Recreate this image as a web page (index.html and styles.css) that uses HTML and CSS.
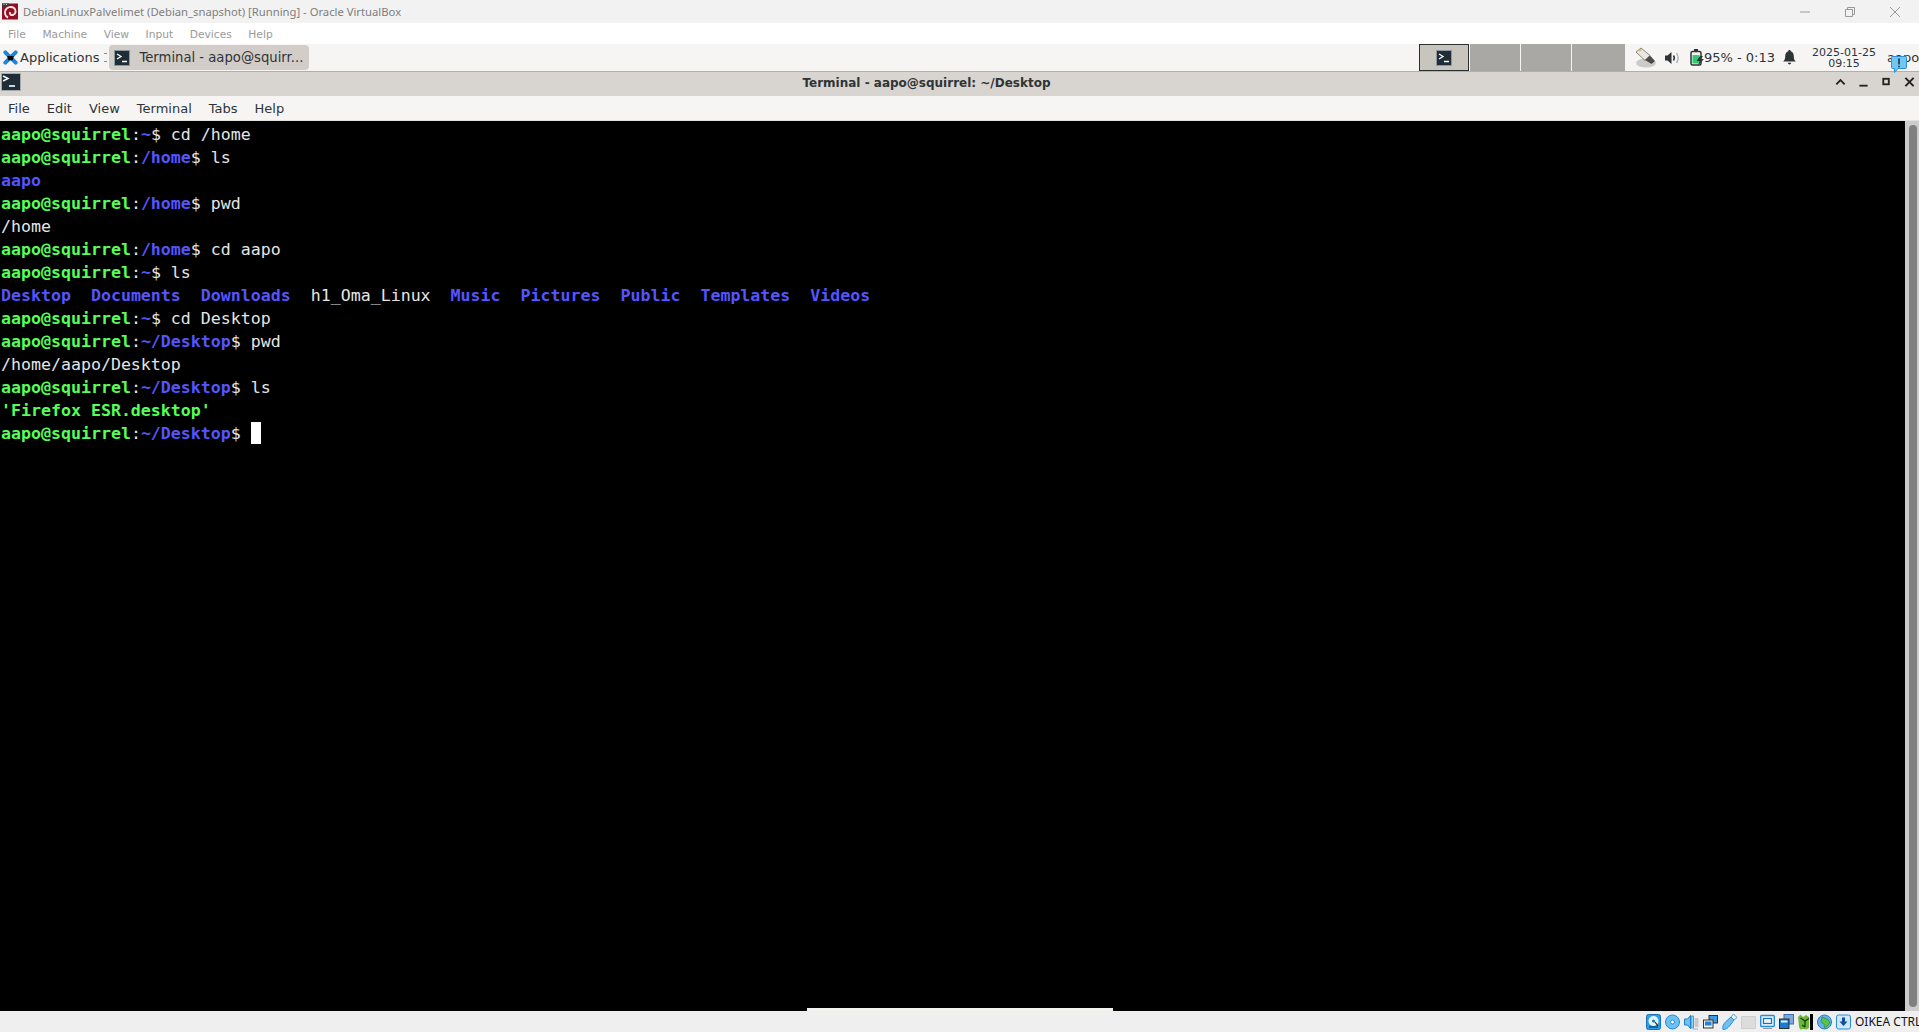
FILE: index.html
```html
<!DOCTYPE html>
<html lang="en">
<head>
<meta charset="utf-8">
<title>DebianLinuxPalvelimet</title>
<link rel="stylesheet" href="styles.css">
</head>
<body>
<div class="screen">
  <header class="host-title">
    <svg class="host-logo" viewBox="0 0 16 16"><rect width="16" height="16" fill="#8f1024"/><path d="M0 0h7v3H0z" fill="#3a3a3a"/><path d="M1.500 1h1M4 1h1" stroke="#ddd"/><path d="M6 14C3 12.500 2.500 9 3.500 6.500 5 3.500 9.500 2.500 12 4.500 14.500 6.500 14 10.500 11 11.500 9 12 7.300 10.500 8 8.500" fill="none" stroke="#ffdfe0" stroke-width="2"/></svg>
    <span class="host-title-text">DebianLinuxPalvelimet (Debian_snapshot) [Running] - Oracle VirtualBox</span>
    <div class="host-controls">
      <svg viewBox="0 0 10 10"><path d="M0 5h10" stroke="#999" fill="none"/></svg>
      <svg viewBox="0 0 10 10"><path d="M.5 2.500h7v7h-7zM2.500 2.500v-2h7v7h-2" stroke="#999" fill="none"/></svg>
      <svg viewBox="0 0 10 10"><path d="M0 0l10 10M10 0L0 10" stroke="#999" fill="none"/></svg>
    </div>
  </header>
  <nav class="host-menu"><span>File</span><span>Machine</span><span>View</span><span>Input</span><span>Devices</span><span>Help</span></nav>
  <div class="panel">
    <svg class="apps-logo" viewBox="0 0 16 16"><path d="M2.500 2.500l11 11M13.500 2.500l-11 11" stroke="#1a86e0" stroke-width="4.200" stroke-linecap="round"/><path d="M4.500 6.500h7l-1 4.500h-5z" fill="#0c0c0c"/></svg>
    <span class="apps-label">Applications</span>
    <span class="panel-sep"></span>
    <div class="task">
      <svg class="term-icon" viewBox="0 0 16 16"><rect x=".5" y=".5" width="15" height="15" fill="#1f2d38" stroke="#8e979c"/><path d="M3 4l4 2.500L3 9" fill="none" stroke="#fff" stroke-width="1.300"/><path d="M8 11.500h5" stroke="#fff" stroke-width="1.500"/></svg>
      <span>Terminal - aapo@squirr...</span>
    </div>
    <div class="panel-spacer"></div>
    <div class="pager">
      <div class="pager-active"><svg class="term-icon" viewBox="0 0 16 16"><rect x=".5" y=".5" width="15" height="15" fill="#1f2d38" stroke="#8e979c"/><path d="M3 4l4 2.500L3 9" fill="none" stroke="#fff" stroke-width="1.300"/><path d="M8 11.500h5" stroke="#fff" stroke-width="1.500"/></svg></div>
      <div class="pager-cell"></div>
      <div class="pager-cell"></div>
      <div class="pager-cell pager-last"></div>
    </div>
    <div class="tray">
      <svg class="tray-usb" viewBox="0 0 21 21"><ellipse cx="11" cy="16" rx="10" ry="4.500" fill="#999" opacity=".45"/><path d="M1 5l5-4 9 7.500-5 5z" fill="#e8e8e0" stroke="#7a7a74" stroke-width=".9"/><path d="M10 13l5-4.500 5 5.500-3.500 3z" fill="#4a4a4a"/><path d="M3.500 3.500l2-1.500 1.500 1-2 1.500z" fill="#d9c04a"/></svg>
      <svg class="tray-vol" viewBox="0 0 16 14"><path d="M1 4.500h2.500L7.500 1v12L3.500 9.500H1z" fill="#2d3436"/><path d="M9.500 4.500c1 1.500 1 3.500 0 5" fill="none" stroke="#2d3436" stroke-width="1.500"/><path d="M12.500 2c2 3 2 7 0 10" fill="none" stroke="#a9adae" stroke-width="1.300"/></svg>
      <svg class="tray-bat" viewBox="0 0 15 17"><rect x="1" y="2.500" width="10" height="13.500" rx="1.500" fill="none" stroke="#2d3436" stroke-width="1.500"/><rect x="4" y="0" width="4" height="2.500" fill="#2d3436"/><rect x="2.500" y="6" width="7" height="8.500" fill="#2ecc71"/><path d="M10 7l-3.500 5h3L8 16.500 14 10h-3l2-3z" fill="#2d3436"/></svg>
      <span class="bat-text">95% - 0:13</span>
      <svg class="tray-bell" viewBox="0 0 13 15"><path d="M6.500 0c.8 0 1.200.5 1.200 1.200C10 2 10.800 4 10.800 6.500c0 2.500.7 3.800 2 5H.2c1.300-1.200 2-2.500 2-5C2.200 4 3 2 5.300 1.200 5.300.5 5.700 0 6.500 0zM4.800 12.800h3.400c-.2 1-.9 1.700-1.700 1.700s-1.500-.7-1.700-1.700z" fill="#2d3436"/></svg>
      <div class="clock"><span>2025-01-25</span><span>09:15</span></div>
      <span class="user">aapo</span>
    </div>
    <div class="bubble">
      <svg viewBox="0 0 16 17"><path d="M1.500.5h13a1 1 0 0 1 1 1v10a1 1 0 0 1-1 1H7L3.500 16.500V12.500h-2a1 1 0 0 1-1-1v-10a1 1 0 0 1 1-1z" fill="#70c6f4" stroke="#2d8fd5"/><path d="M8 2.500v6" stroke="#111" stroke-width="1.300"/><path d="M8 9.800v1.500" stroke="#111" stroke-width="1.300"/></svg>
    </div>
  </div>
  <div class="win-title">
    <svg class="win-icon" viewBox="0 0 20 18"><rect x=".5" y=".5" width="19" height="17" fill="#1f2d38" stroke="#a2a8ab"/><path d="M2 3l5 2.500L2 8" fill="none" stroke="#fff" stroke-width="1.400"/><path d="M8 13h6" stroke="#fff" stroke-width="1.600"/></svg>
    <span class="win-title-text">Terminal - aapo@squirrel: ~/Desktop</span>
    <div class="win-controls">
      <svg viewBox="0 0 12 12"><path d="M1.500 8.500L6 4l4.500 4.500" fill="none" stroke="#222" stroke-width="2"/></svg>
      <svg viewBox="0 0 12 12"><path d="M1.500 10h9" stroke="#222" stroke-width="2"/></svg>
      <svg viewBox="0 0 12 12"><rect x="2.500" y="2.500" width="6" height="6" fill="none" stroke="#222" stroke-width="2"/></svg>
      <svg viewBox="0 0 12 12"><path d="M1.500 1.500l9 9M10.500 1.500l-9 9" stroke="#222" stroke-width="2.200"/></svg>
    </div>
  </div>
  <nav class="term-menu"><span>File</span><span>Edit</span><span>View</span><span>Terminal</span><span>Tabs</span><span>Help</span></nav>
  <main class="term-area">
    <div class="term-text">
      <div class="ln"><b class="g">aapo@squirrel</b>:<b class="b">~</b>$ cd /home</div>
      <div class="ln"><b class="g">aapo@squirrel</b>:<b class="b">/home</b>$ ls</div>
      <div class="ln"><b class="b">aapo</b></div>
      <div class="ln"><b class="g">aapo@squirrel</b>:<b class="b">/home</b>$ pwd</div>
      <div class="ln">/home</div>
      <div class="ln"><b class="g">aapo@squirrel</b>:<b class="b">/home</b>$ cd aapo</div>
      <div class="ln"><b class="g">aapo@squirrel</b>:<b class="b">~</b>$ ls</div>
      <div class="ln"><b class="b">Desktop</b>  <b class="b">Documents</b>  <b class="b">Downloads</b>  h1_Oma_Linux  <b class="b">Music</b>  <b class="b">Pictures</b>  <b class="b">Public</b>  <b class="b">Templates</b>  <b class="b">Videos</b></div>
      <div class="ln"><b class="g">aapo@squirrel</b>:<b class="b">~</b>$ cd Desktop</div>
      <div class="ln"><b class="g">aapo@squirrel</b>:<b class="b">~/Desktop</b>$ pwd</div>
      <div class="ln">/home/aapo/Desktop</div>
      <div class="ln"><b class="g">aapo@squirrel</b>:<b class="b">~/Desktop</b>$ ls</div>
      <div class="ln"><b class="g">'Firefox ESR.desktop'</b></div>
      <div class="ln"><b class="g">aapo@squirrel</b>:<b class="b">~/Desktop</b>$ <span class="cursor"></span></div>
    </div>
    <div class="scrollbar"><div class="thumb"></div></div>
    <div class="strip"></div>
  </main>
  <footer class="status">
    <svg class="si" viewBox="0 0 15 16"><rect x=".5" y=".5" width="14" height="15" rx="2" fill="#2f9fe8" stroke="#1670b8"/><circle cx="7.500" cy="7" r="5" fill="#e8f4fc"/><circle cx="7.500" cy="7" r="1.500" fill="#1670b8"/><path d="M3 13h9M9 8l3 4" stroke="#123" stroke-width="1.200"/></svg>
    <svg class="si" viewBox="0 0 15 16"><circle cx="7.500" cy="8" r="7" fill="#6cc0f2" stroke="#2a8bd4"/><circle cx="7.500" cy="8" r="2" fill="#fff" stroke="#2a8bd4"/></svg>
    <svg class="si" viewBox="0 0 15 16"><path d="M.5 5h3l3-3.500v13l-3-3.500h-3z" fill="#6cc0f2" stroke="#1f7fc9"/><rect x="7" y="2" width="2.500" height="12" fill="#8fd0f5" stroke="#1f7fc9" stroke-width=".7"/><path d="M10.500 4h4v9h-4z" fill="#c9c9c9"/><path d="M9 15h5" stroke="#aaa"/></svg>
    <svg class="si" viewBox="0 0 15 16"><rect x="6" y="1.500" width="8.500" height="7.500" fill="#3e9ae3" stroke="#222" stroke-width=".9"/><rect x=".5" y="6" width="9.500" height="8" fill="#e6f2fb" stroke="#222" stroke-width=".9"/><rect x="2" y="7.500" width="6.500" height="4" fill="#2b7fcf"/></svg>
    <svg class="si" viewBox="0 0 15 16"><path d="M1 15.500c-.8-3 .3-5.500 3-8L9 3l3 3-4.500 6c-2 2.500-4 3.500-6.500 3.500z" fill="#6cc0f2" stroke="#2a8bd4"/><path d="M9 3l2.500-3L15 3.500 12 6z" fill="#e8f4fc" stroke="#2a8bd4" stroke-width=".8"/></svg>
    <svg class="si" viewBox="0 0 15 16"><path d="M.5 2.500h14v12H.5z" fill="#dcdcdc" stroke="#cfcfcf"/></svg>
    <svg class="si" viewBox="0 0 15 16"><rect x=".7" y="1.500" width="13.600" height="11" rx="1" fill="#eaf5fc" stroke="#2a8bd4" stroke-width="1.400"/><rect x="3.500" y="4.500" width="8" height="5" fill="none" stroke="#1d6fb8" stroke-width="1.200"/><path d="M3 14.500h9" stroke="#999"/></svg>
    <svg class="si" viewBox="0 0 15 16"><rect x="5" y=".5" width="9.500" height="9.500" fill="#7ea9dc" stroke="#3b6fae"/><rect x=".5" y="5" width="9.500" height="9.500" fill="#1b7bd0" stroke="#222" stroke-width=".9"/><rect x="2" y="6.500" width="6.500" height="2" fill="#e8f4fc"/></svg>
    <svg class="si" viewBox="0 0 15 16"><path d="M0 3l2.500-2.500L5 3l3-2 3 2v11l-2.500 1.500L5 15l-3 .5-1-3z" fill="#6db83a"/><path d="M2.500 4l4.500 3 4-2.500M7 7v6M4 11l3 2" fill="none" stroke="#123a08" stroke-width="1.200"/><rect x="12" y="0" width="3" height="16" fill="#000"/></svg>
    <svg class="si" viewBox="0 0 15 16"><circle cx="7.500" cy="8" r="7" fill="#63b3ee" stroke="#2a7fc7"/><path d="M5 3l6 2.500 2 3.500-5 5.500-1-4.500-3-2z" fill="#5cc04a" stroke="#2e8b2e" stroke-width=".7"/></svg>
    <svg class="si" viewBox="0 0 15 16"><rect x=".5" y="1" width="14" height="14" rx="2" fill="#cfe7f9" stroke="#2a8bd4"/><path d="M6 3.500h3v4h2.500L7.500 12 3.500 7.500H6z" fill="#0f4f9c"/></svg>
    <span class="status-key">OIKEA CTRL</span>
  </footer>
</div>
</body>
</html>
```

FILE: styles.css
```css
* { box-sizing: border-box; }
html, body { margin: 0; padding: 0; height: 100%; overflow: hidden; background: #000; }
.screen { display: flex; flex-direction: column; width: 1919px; height: 1032px; font-family: "DejaVu Sans", sans-serif; }

.host-title { flex: 0 0 23px; display: flex; align-items: center; background: #f2f2f2; }
.host-logo { width: 16px; height: 17px; margin-left: 2px; }
.host-title-text { margin-left: 5px; font-family: "Noto Sans", sans-serif; font-size: 11.250px; color: #7e7e7e; }
.host-controls { margin-left: auto; display: flex; align-items: center; gap: 35px; padding-right: 19px; }
.host-controls svg { width: 10px; height: 10px; display: block; }

.host-menu { flex: 0 0 21px; display: flex; align-items: center; gap: 16.500px; padding: 2px 0 0 8px; background: #fff; font-size: 10.700px; color: #9a9a9a; }
.host-menu span { white-space: nowrap; }

.panel { position: relative; flex: 0 0 28px; display: flex; align-items: center; background: #f6f5f4; border-bottom: 1px solid #b3aeaa; font-size: 13px; color: #2e3436; overflow: visible; }
.apps-logo { width: 15px; height: 15px; margin-left: 3px; }
.apps-label { margin-left: 2px; font-size: 13px; }
.panel-sep { width: 3px; height: 9px; margin-left: 5px; border-top: 1px solid #888; border-bottom: 1px solid #888; }
.task { display: flex; align-items: center; gap: 9px; width: 200px; height: 25px; margin-left: 2px; padding-left: 5px; background: #d2cdc9; border-radius: 4px; font-size: 13.200px; }
.term-icon { width: 16px; height: 16px; display: block; }
.panel-spacer { flex: 1; }
.pager { display: flex; height: 27px; }
.pager-active { display: flex; align-items: center; justify-content: center; width: 50px; background: #c8c5bf; border: 1px solid #2a2f30; }
.pager-cell { width: 50px; margin-left: 1px; background: #aaa8a5; }
.pager-last { width: 53px; }
.tray { display: flex; align-items: center; height: 27px; width: 294px; padding-left: 10px; white-space: nowrap; }
.tray-usb { flex: none; width: 21px; height: 21px; }
.tray-vol { flex: none; width: 16px; height: 14px; margin-left: 8px; }
.tray-bat { flex: none; width: 15px; height: 17px; margin-left: 10px; }
.bat-text { margin-left: -1px; font-size: 13px; white-space: nowrap; }
.tray-bell { flex: none; width: 13px; height: 15px; margin-left: 8px; }
.clock { display: flex; flex-direction: column; align-items: center; margin-left: 16px; font-size: 11px; line-height: 11px; white-space: nowrap; }
.user { margin-left: 11px; font-size: 13px; }
.bubble { position: absolute; left: 1891px; top: 12px; width: 16px; height: 17px; z-index: 3; }
.bubble svg { display: block; width: 16px; height: 17px; }

.win-title { position: relative; flex: 0 0 24px; display: flex; align-items: center; justify-content: center; padding-right: 66px; padding-bottom: 2px; background: #d8d4d0; }
.win-icon { position: absolute; left: 1px; top: 1px; width: 20px; height: 18px; }
.win-title-text { font-size: 12px; font-weight: 700; color: #2e3436; }
.win-controls { position: absolute; right: 4px; top: 4px; display: flex; gap: 12px; }
.win-controls svg { width: 11px; height: 12px; display: block; }

.term-menu { flex: 0 0 25px; display: flex; align-items: center; gap: 17px; padding-left: 8px; background: #f6f5f4; font-size: 13px; color: #2e3436; border-bottom: 1px solid #e4e2df; }

.term-area { position: relative; flex: 1; display: flex; background: #000; min-height: 0; }
.term-text { flex: 1; padding: 2px 0 0 1px; font-family: "DejaVu Sans Mono", monospace; font-size: 16.600px; line-height: 23px; color: #e5e5e5; }
.ln { height: 23px; white-space: pre; }
.g { color: #55ff55; font-weight: 700; }
.b { color: #5555ff; font-weight: 700; }
.cursor { display: inline-block; width: 10px; height: 22px; background: #fff; vertical-align: top; }
.scrollbar { flex: 0 0 14px; background: #ccc; padding: 4px 2px 4px 4px; }
.thumb { width: 8px; height: 100%; border-radius: 4px; background: #808080; }
.strip { position: absolute; left: 807px; bottom: 0; width: 306px; height: 3px; background: #f4f3f0; }

.status { flex: 0 0 21px; display: flex; align-items: center; justify-content: flex-end; gap: 4px; background: #efefef; }
.si { width: 15px; height: 16px; display: block; }
.status-key { font-family: "Noto Sans", sans-serif; font-size: 12px; color: #111; white-space: nowrap; width: 64px; }
```
